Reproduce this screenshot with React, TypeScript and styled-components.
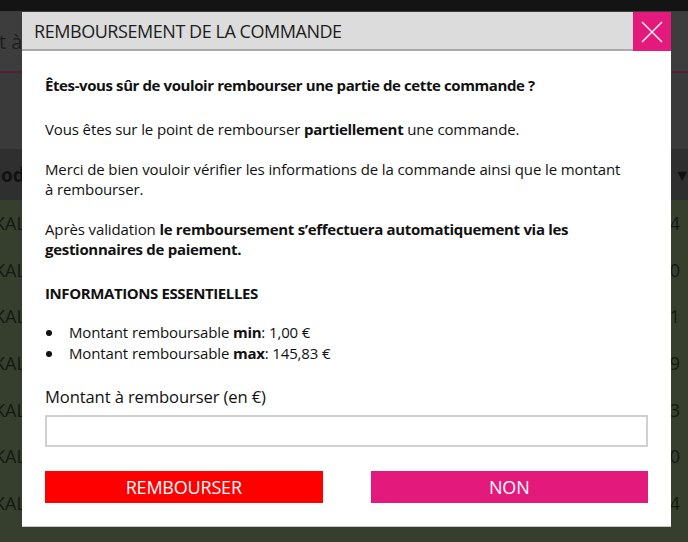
import React from "react";
import styled, { createGlobalStyle } from "styled-components";

const GlobalStyle = createGlobalStyle`
  html, body {
    margin: 0;
    padding: 0;
    background: #363f2d;
    font-family: "Open Sans", "Liberation Sans", sans-serif;
    overflow: hidden;
  }
`;

const Page = styled.div`
  width: 688px;
  height: 542px;
  position: relative;
  overflow: hidden;
  display: flex;
  flex-direction: column;
  background: #363f2d;
`;

const TopBar = styled.div`
  height: 11px;
  background: #141414;
`;

const SearchBand = styled.div`
  height: 59px;
  background: #3d3d3d;
  border-bottom: 2px solid #5a1c38;
  display: flex;
  align-items: center;
  color: #1e1e1e;
  font-size: 20px;
  padding-top: 1px;
`;

const Filler = styled.div`
  height: 76px;
  background: #3a3a3a;
`;

const TableHead = styled.div`
  height: 51px;
  background: #2f2f2f;
  display: flex;
  align-items: center;
  justify-content: space-between;
  color: #111;
  font-weight: 700;
  font-size: 19px;
`;

const Cell = styled.span<{ $left?: number; $right?: number; $size?: number }>`
  margin-left: ${(p) => p.$left ?? 0}px;
  margin-right: ${(p) => p.$right ?? 0}px;
  ${(p) => (p.$size ? `font-size: ${p.$size}px;` : "")}
`;

const Row = styled.div`
  height: 46.6px;
  display: flex;
  align-items: center;
  justify-content: space-between;
  color: #141812;
  font-size: 18px;
  flex-shrink: 0;
`;

const Overlay = styled.div`
  position: absolute;
  inset: 0;
`;

const Modal = styled.div`
  position: absolute;
  left: 22px;
  top: 12px;
  width: 649px;
  background: #fff;
  box-shadow: 0 1px 0 #c8c8c8;
  color: #111;
`;

const Header = styled.div`
  height: 37px;
  background: #dcdcdc;
  border-bottom: 2px solid #aaaaaa;
  display: flex;
  align-items: center;
  justify-content: space-between;
`;

const Title = styled.h2`
  margin: 0 0 0 12px;
  font-size: 18px;
  font-weight: 400;
  color: #1c1c1c;
  letter-spacing: -0.45px;
`;

const CloseButton = styled.button`
  width: 38px;
  height: 39px;
  align-self: flex-start;
  border: none;
  padding: 0;
  background: #e3197b;
  display: flex;
  align-items: center;
  justify-content: center;
  cursor: pointer;
`;

const Body = styled.div`
  padding: 24px 23px 23px;
  font-size: 15px;
  line-height: 20px;
  letter-spacing: -0.12px;
`;

const Para = styled.p<{ $mb: number; $bold?: boolean }>`
  margin: 0 0 ${(p) => p.$mb}px;
  max-width: 580px;
  font-weight: ${(p) => (p.$bold ? 700 : 400)};
  letter-spacing: ${(p) => (p.$bold ? "-0.4px" : "inherit")};

  b {
    letter-spacing: -0.3px;
  }
`;

const List = styled.ul`
  margin: 0 0 24px;
  padding: 0;
  list-style: none;

  b {
    letter-spacing: -0.3px;
  }
`;

const Item = styled.li`
  position: relative;
  padding-left: 24px;
  line-height: 20.5px;

  &::before {
    content: "";
    position: absolute;
    left: 1px;
    top: 8px;
    width: 6px;
    height: 6px;
    border-radius: 50%;
    background: #111;
  }
`;

const Label = styled.label`
  display: block;
  font-size: 16.6px;
  margin-bottom: 8px;
`;

const Input = styled.input`
  display: block;
  box-sizing: border-box;
  width: 100%;
  height: 32px;
  border: 2px solid #d0d0d0;
  margin: 0 0 24px;
  font: inherit;
  padding: 0 8px;
  outline: none;
`;

const Actions = styled.div`
  display: grid;
  grid-template-columns: 1fr 1fr;
  column-gap: 48px;
`;

const ActionButton = styled.button<{ $color: string }>`
  height: 32px;
  border: none;
  background: ${(p) => p.$color};
  color: #fff;
  font-family: inherit;
  font-size: 18px;
  letter-spacing: -0.2px;
  text-transform: uppercase;
  cursor: pointer;
`;

const rows = ["4", "0", "1", "9", "3", "0", "4"];

export default function App() {
  return (
    <>
      <GlobalStyle />
      <Page>
        <TopBar />
        <SearchBand>
          <Cell $left={-1}>t à</Cell>
        </SearchBand>
        <Filler />
        <TableHead>
          <Cell $left={-11}>Code</Cell>
          <Cell $right={-2} $size={16}>▼</Cell>
        </TableHead>
        {rows.map((n, i) => (
          <Row key={i}>
            <Cell $left={-6}>KAL</Cell>
            <Cell $right={8}>{n}</Cell>
          </Row>
        ))}
        <Overlay>
          <Modal role="dialog">
            <Header>
              <Title>REMBOURSEMENT DE LA COMMANDE</Title>
              <CloseButton aria-label="Fermer">
                <svg width="22" height="22" viewBox="0 0 22 22">
                  <path d="M1 1 L21 21 M21 1 L1 21" stroke="#fff" strokeWidth="1.4" fill="none" />
                </svg>
              </CloseButton>
            </Header>
            <Body>
              <Para $mb={24} $bold>
                Êtes-vous sûr de vouloir rembourser une partie de cette commande ?
              </Para>
              <Para $mb={20}>
                Vous êtes sur le point de rembourser <b>partiellement</b> une commande.
              </Para>
              <Para $mb={20}>
                Merci de bien vouloir vérifier les informations de la commande ainsi que le montant à rembourser.
              </Para>
              <Para $mb={24}>
                Après validation <b>le remboursement s’effectuera automatiquement via les gestionnaires de paiement.</b>
              </Para>
              <Para $mb={19} $bold>
                INFORMATIONS ESSENTIELLES
              </Para>
              <List>
                <Item>
                  Montant remboursable <b>min</b>: 1,00 €
                </Item>
                <Item>
                  Montant remboursable <b>max</b>: 145,83 €
                </Item>
              </List>
              <Label htmlFor="amount">Montant à rembourser (en €)</Label>
              <Input id="amount" type="text" />
              <Actions>
                <ActionButton $color="#ff0000">Rembourser</ActionButton>
                <ActionButton $color="#e3197b">Non</ActionButton>
              </Actions>
            </Body>
          </Modal>
        </Overlay>
      </Page>
    </>
  );
}
